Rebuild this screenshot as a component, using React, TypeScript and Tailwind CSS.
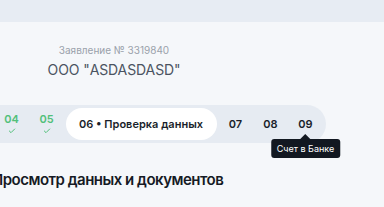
import React from "react";
import { Check } from "lucide-react";

const DONE = ["04", "05"];
const NEXT = ["07", "08"];

export default function App() {
  return (
    <div
      className="min-h-[207px] w-full overflow-hidden bg-[#f5f7fa]"
      style={{ fontFamily: "Inter, 'Noto Sans', sans-serif" }}
    >
      {/* top band */}
      <div className="h-[22px] bg-[#e7ecf3]" />

      {/* application header */}
      <div className="w-[228px] pt-[21px] text-center">
        <div className="text-[10px] leading-[14px] text-[#9aa1ab]">Заявление № 3319840</div>
        <div className="mt-[3px] text-[14px] leading-[20px] tracking-[-0.1px] text-[#4a5361]">ООО "ASDASDASD"</div>
      </div>

      {/* stepper */}
      <div className="mt-[25px] ml-[-6px] flex w-max items-center rounded-r-full bg-[#e6ebf2] py-[3px] pr-[3px]">
        {DONE.map((n) => (
          <div key={n} className="flex h-[32px] w-[35px] flex-col items-center justify-center">
            <span className="text-[11px] font-semibold leading-[13px] text-[#52c07a]">{n}</span>
            <Check className="mt-[1px] h-[8px] w-[8px] text-[#52c07a]" strokeWidth={3} />
          </div>
        ))}
        <div className="mx-[1.5px] flex h-[32px] w-[151px] items-center justify-center rounded-full bg-white text-[11px] font-semibold text-[#1a1f2b]">
          06 • Проверка данных
        </div>
        {NEXT.map((n) => (
          <div key={n} className="flex h-[32px] w-[35px] items-center justify-center text-[11px] font-semibold text-[#1a1f2b]">
            {n}
          </div>
        ))}
        <div className="relative flex h-[32px] w-[35px] items-center justify-center text-[11px] font-semibold text-[#1a1f2b]">
          09
          <div className="absolute left-1/2 top-[26px] z-10 flex -translate-x-1/2 flex-col items-center">
            <div className="h-0 w-0 border-x-[5px] border-b-[5px] border-x-transparent border-b-[#121821]" />
            <div className="whitespace-nowrap rounded-[3px] bg-[#121821] px-[6px] text-[9px] leading-[19px] font-normal text-white">
              Счет в Банке
            </div>
          </div>
        </div>
      </div>

      {/* section title */}
      <h2 className="ml-[-8px] mt-[25px] text-[15px] font-semibold leading-[24px] tracking-[-0.5px] text-[#151a24]">
        Просмотр данных и документов
      </h2>
    </div>
  );
}
